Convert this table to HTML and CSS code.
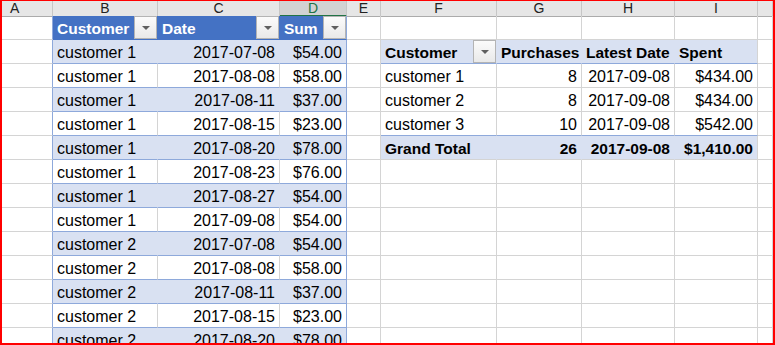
FILE: index.html
```html
<!DOCTYPE html>
<html lang="en">
<head>
    <meta charset="UTF-8">
    <title>Customer purchases</title>
    <link rel="stylesheet" href="styles.css">
</head>
<body>
    <div class="sheet">
        <div class="row col-heads">
            <div class="cell head-a">A</div>
            <div class="cell">B</div>
            <div class="cell">C</div>
            <div class="cell active">D</div>
            <div class="cell">E</div>
            <div class="cell">F</div>
            <div class="cell">G</div>
            <div class="cell">H</div>
            <div class="cell">I</div>
            <div class="cell"></div>
        </div>

        <div class="row">
            <div class="cell tbl-left"></div>
            <div class="cell th filter-cell">Customer<span class="filter"></span></div>
            <div class="cell th filter-cell">Date<span class="filter"></span></div>
            <div class="cell th tbl-end filter-cell">Sum<span class="filter"></span></div>
            <div class="cell"></div>
            <div class="cell"></div>
            <div class="cell"></div>
            <div class="cell"></div>
            <div class="cell"></div>
            <div class="cell"></div>
        </div>

        <div class="row">
            <div class="cell tbl-left"></div>
            <div class="cell tbl band">customer 1</div>
            <div class="cell tbl band num">2017-07-08</div>
            <div class="cell tbl band tbl-end num">$54.00</div>
            <div class="cell"></div>
            <div class="cell pv-head filter-cell">Customer<span class="filter"></span></div>
            <div class="cell pv-head">Purchases</div>
            <div class="cell pv-head">Latest Date</div>
            <div class="cell pv-head last">Spent</div>
            <div class="cell"></div>
        </div>

        <div class="row">
            <div class="cell tbl-left"></div>
            <div class="cell tbl">customer 1</div>
            <div class="cell tbl num">2017-08-08</div>
            <div class="cell tbl tbl-end num">$58.00</div>
            <div class="cell"></div>
            <div class="cell">customer 1</div>
            <div class="cell num">8</div>
            <div class="cell num">2017-09-08</div>
            <div class="cell num">$434.00</div>
            <div class="cell"></div>
        </div>

        <div class="row">
            <div class="cell tbl-left"></div>
            <div class="cell tbl band">customer 1</div>
            <div class="cell tbl band num">2017-08-11</div>
            <div class="cell tbl band tbl-end num">$37.00</div>
            <div class="cell"></div>
            <div class="cell">customer 2</div>
            <div class="cell num">8</div>
            <div class="cell num">2017-09-08</div>
            <div class="cell num">$434.00</div>
            <div class="cell"></div>
        </div>

        <div class="row">
            <div class="cell tbl-left"></div>
            <div class="cell tbl">customer 1</div>
            <div class="cell tbl num">2017-08-15</div>
            <div class="cell tbl tbl-end num">$23.00</div>
            <div class="cell"></div>
            <div class="cell pv-last">customer 3</div>
            <div class="cell pv-last num">10</div>
            <div class="cell pv-last num">2017-09-08</div>
            <div class="cell pv-last num">$542.00</div>
            <div class="cell"></div>
        </div>

        <div class="row">
            <div class="cell tbl-left"></div>
            <div class="cell tbl band">customer 1</div>
            <div class="cell tbl band num">2017-08-20</div>
            <div class="cell tbl band tbl-end num">$78.00</div>
            <div class="cell"></div>
            <div class="cell pv-total">Grand Total</div>
            <div class="cell pv-total num">26</div>
            <div class="cell pv-total num">2017-09-08</div>
            <div class="cell pv-total last num">$1,410.00</div>
            <div class="cell"></div>
        </div>

        <div class="row">
            <div class="cell tbl-left"></div>
            <div class="cell tbl">customer 1</div>
            <div class="cell tbl num">2017-08-23</div>
            <div class="cell tbl tbl-end num">$76.00</div>
            <div class="cell"></div><div class="cell"></div><div class="cell"></div><div class="cell"></div><div class="cell"></div><div class="cell"></div>
        </div>

        <div class="row">
            <div class="cell tbl-left"></div>
            <div class="cell tbl band">customer 1</div>
            <div class="cell tbl band num">2017-08-27</div>
            <div class="cell tbl band tbl-end num">$54.00</div>
            <div class="cell"></div><div class="cell"></div><div class="cell"></div><div class="cell"></div><div class="cell"></div><div class="cell"></div>
        </div>

        <div class="row">
            <div class="cell tbl-left"></div>
            <div class="cell tbl">customer 1</div>
            <div class="cell tbl num">2017-09-08</div>
            <div class="cell tbl tbl-end num">$54.00</div>
            <div class="cell"></div><div class="cell"></div><div class="cell"></div><div class="cell"></div><div class="cell"></div><div class="cell"></div>
        </div>

        <div class="row">
            <div class="cell tbl-left"></div>
            <div class="cell tbl band">customer 2</div>
            <div class="cell tbl band num">2017-07-08</div>
            <div class="cell tbl band tbl-end num">$54.00</div>
            <div class="cell"></div><div class="cell"></div><div class="cell"></div><div class="cell"></div><div class="cell"></div><div class="cell"></div>
        </div>

        <div class="row">
            <div class="cell tbl-left"></div>
            <div class="cell tbl">customer 2</div>
            <div class="cell tbl num">2017-08-08</div>
            <div class="cell tbl tbl-end num">$58.00</div>
            <div class="cell"></div><div class="cell"></div><div class="cell"></div><div class="cell"></div><div class="cell"></div><div class="cell"></div>
        </div>

        <div class="row">
            <div class="cell tbl-left"></div>
            <div class="cell tbl band">customer 2</div>
            <div class="cell tbl band num">2017-08-11</div>
            <div class="cell tbl band tbl-end num">$37.00</div>
            <div class="cell"></div><div class="cell"></div><div class="cell"></div><div class="cell"></div><div class="cell"></div><div class="cell"></div>
        </div>

        <div class="row">
            <div class="cell tbl-left"></div>
            <div class="cell tbl">customer 2</div>
            <div class="cell tbl num">2017-08-15</div>
            <div class="cell tbl tbl-end num">$23.00</div>
            <div class="cell"></div><div class="cell"></div><div class="cell"></div><div class="cell"></div><div class="cell"></div><div class="cell"></div>
        </div>

        <div class="row">
            <div class="cell tbl-left"></div>
            <div class="cell tbl band">customer 2</div>
            <div class="cell tbl band num">2017-08-20</div>
            <div class="cell tbl band tbl-end num">$78.00</div>
            <div class="cell"></div><div class="cell"></div><div class="cell"></div><div class="cell"></div><div class="cell"></div><div class="cell"></div>
        </div>
    </div>
</body>
</html>
```

FILE: styles.css
```css
* {
    margin: 0;
    padding: 0;
    box-sizing: border-box;
}

body {
    background: #ffffff;
    font-family: "Liberation Sans", Arial, sans-serif;
    color: #000000;
}

.sheet {
    width: 775px;
    height: 345px;
    overflow: hidden;
    border: 2px solid #ff0000;
    border-top-width: 1px;
}

.row {
    display: grid;
    grid-template-columns: 51px 105px 122px 67px 34px 116px 85px 93px 83px 1fr;
    height: 24px;
}

.cell {
    border-right: 1px solid #d4d4d4;
    border-bottom: 1px solid #d4d4d4;
    padding: 2px 4px 0;
    font-size: 16px;
    line-height: 21px;
    white-space: nowrap;
    overflow: hidden;
}

.num {
    text-align: right;
}

/* Column letters */
.col-heads {
    height: 15px;
    background: #e6e6e6;
}

.col-heads .cell {
    padding-top: 0;
    border-right-color: #c6c6c6;
    border-bottom-color: #ababab;
    font-size: 14px;
    line-height: 14px;
    text-align: center;
    color: #222222;
    overflow: visible;
}

.col-heads .head-a {
    text-align: left;
    padding-left: 8px;
}

.col-heads .active {
    background: #d2d2d2;
    color: #217346;
    border-bottom: 2px solid #217346;
}

/* Data table */
.tbl-left {
    border-right-color: #8ea9db;
}

.th {
    background: #4472c4;
    color: #ffffff;
    font-weight: bold;
    font-size: 15.5px;
    border-right-color: #4472c4;
    border-bottom-color: #4472c4;
}

.tbl {
    border-bottom-color: #8ea9db;
}

.band {
    background: #d9e1f2;
    border-right-color: #d9e1f2;
}

.tbl-end {
    border-right-color: #8ea9db;
}

.filter-cell {
    display: flex;
    justify-content: space-between;
    padding-right: 0;
}

.filter {
    width: 23px;
    height: 23px;
    margin-top: -2px;
    display: flex;
    align-items: center;
    justify-content: center;
    background: linear-gradient(#fbfbfb, #e9e9e9);
    border: 1px solid #b4b4b4;
}

.filter::after {
    content: "";
    border-left: 4px solid transparent;
    border-right: 4px solid transparent;
    border-top: 4px solid #5f5f5f;
}

/* Pivot table */
.pv-head {
    background: #d9e1f2;
    border-right-color: #d9e1f2;
    border-bottom-color: #8ea9db;
    font-weight: bold;
    font-size: 15.5px;
}

.pv-head.last,
.pv-total.last {
    border-right-color: #d4d4d4;
}

.pv-last {
    border-bottom-color: #8ea9db;
}

.pv-total {
    background: #d9e1f2;
    border-right-color: #d9e1f2;
    font-weight: bold;
    font-size: 15.5px;
}
```
